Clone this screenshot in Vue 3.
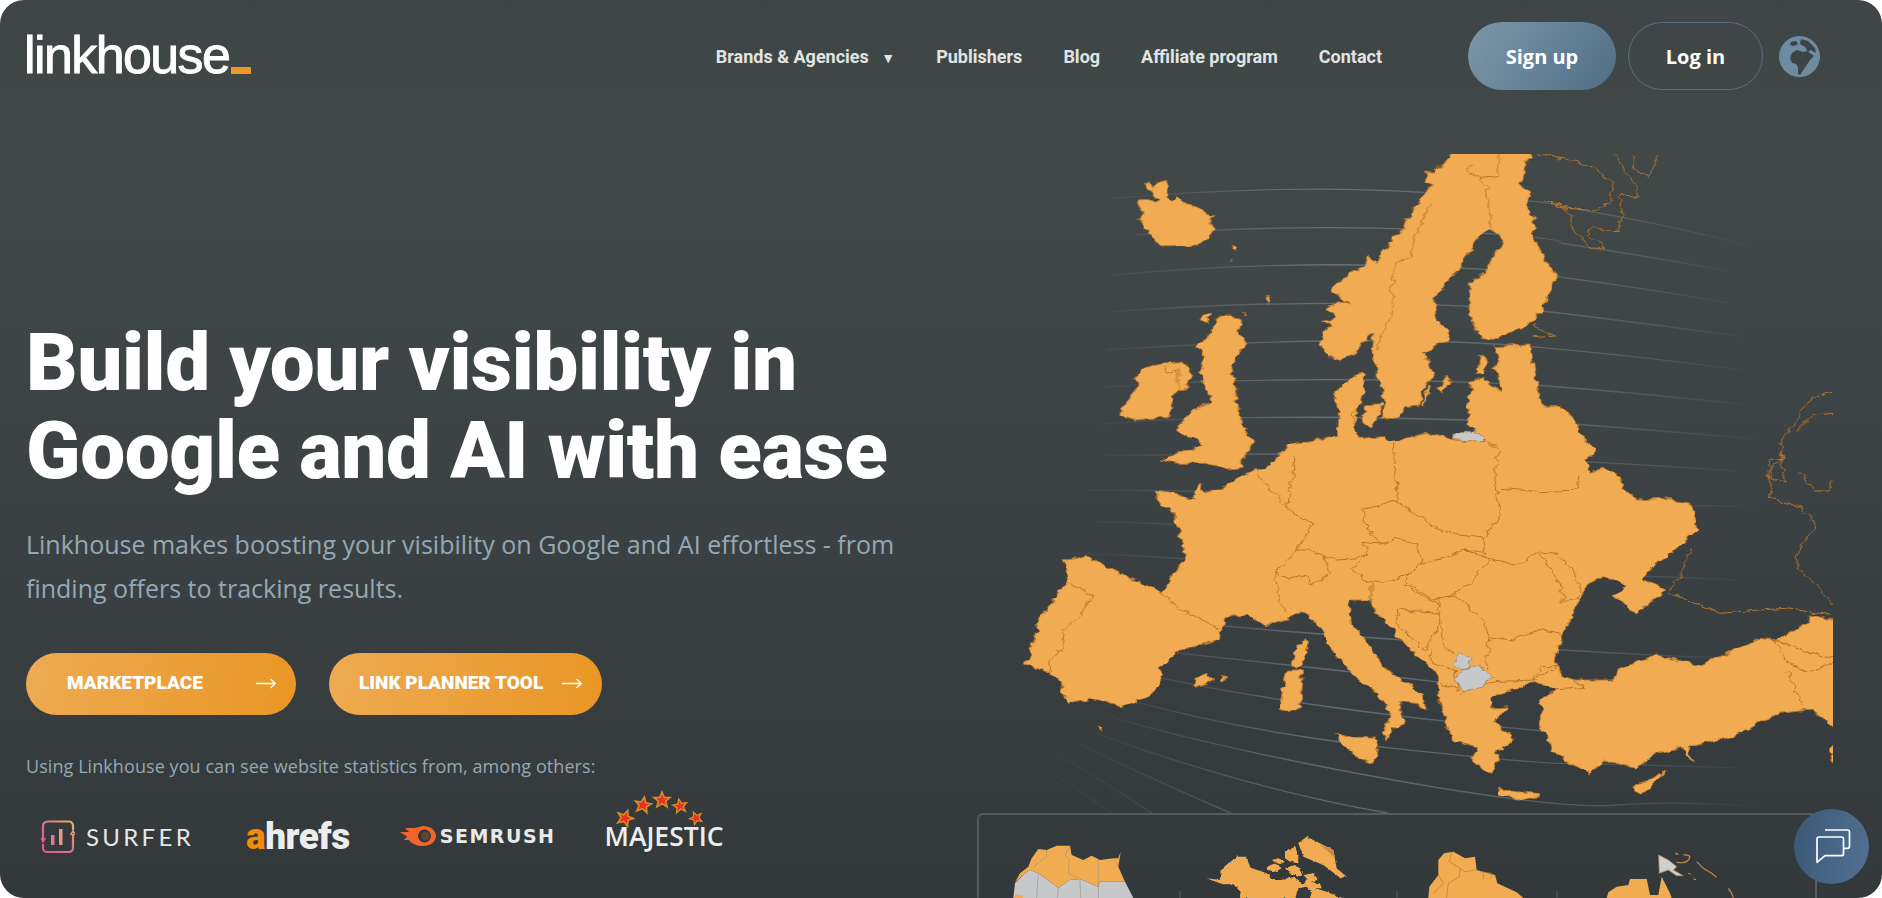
<template>
  <div class="page">
    <header class="topbar">
      <a class="logo">linkhouse<span class="logo-dash"></span></a>
      <nav class="nav">
        <a class="nav-link">Brands &amp; Agencies <span class="caret">▼</span></a>
        <a class="nav-link">Publishers</a>
        <a class="nav-link">Blog</a>
        <a class="nav-link">Affiliate program</a>
        <a class="nav-link">Contact</a>
      </nav>
      <a class="btn-signup">Sign up</a>
      <a class="btn-login">Log in</a>
      <svg class="globe" viewBox="0 0 41 41">
        <circle cx="20.5" cy="20.5" r="20.5" fill="#6d8ba1" />
        <path d="M12 6 17 5 19 8 15 10 11 9ZM22 3 29 5 36 12 37 17 32 14 29 16 26 11 21 8Z" fill="#3b4446" />
        <path d="M11 22 13 17 18 14 24 16 28 15 35 20 31 24 27 30 21 39 19 38 19 31 17 28 13 27Z" fill="#3b4446" />
      </svg>
    </header>

    <section class="hero">
      <h1>Build your visibility in<br />Google and AI with ease</h1>
      <p class="lead">Linkhouse makes boosting your visibility on Google and AI effortless - from finding offers to tracking results.</p>
      <div class="cta-row">
        <a v-for="cta in ctas" :key="cta.label" class="cta" :class="cta.cls">
          <span>{{ cta.label }}</span>
          <svg class="cta-arrow" viewBox="0 0 20 12"><path d="M0 6.5H19M14.5 2 19.2 6.5 14.5 11" fill="none" stroke="#fff" stroke-width="1.3" /></svg>
        </a>
      </div>
      <p class="stats-note">Using Linkhouse you can see website statistics from, among others:</p>
      <div class="logos">
        <div class="surfer">
          <svg viewBox="0 0 34 33" width="34" height="33">
            <defs>
              <linearGradient id="surf" x1="0" y1="1" x2="1" y2="0">
                <stop offset="0" stop-color="#e2558f" />
                <stop offset=".55" stop-color="#d9798a" />
                <stop offset="1" stop-color="#e8b26a" />
              </linearGradient>
            </defs>
            <path d="M2 20V6a4.500 4.500 0 0 1 4.500-4.500H28A4.500 4.500 0 0 1 32 6v4M32 14v14a4 4 0 0 1-4 4H6a4 4 0 0 1-4-4v-4" fill="none" stroke="url(#surf)" stroke-width="2.200" />
            <path d="M0 18 2 22 4.500 18M29.500 15 32 11 34.500 15" fill="none" stroke="url(#surf)" stroke-width="1.500" />
            <rect x="10" y="15" width="3.500" height="10" fill="#e6728c" />
            <rect x="18" y="9" width="3.500" height="16" fill="#e59a7a" />
          </svg>
          <span>SURFER</span>
        </div>
        <div class="ahrefs"><span class="ahrefs-a">a</span>hrefs</div>
        <div class="semrush">
          <svg viewBox="0 0 36 22" width="36" height="22">
            <path d="M0 7 9 7 5 3 15 3 23 1C30 1 36 5 36 11S30 21 23 21C17 21 12 19 9 15L4 15 7 11.500Z" fill="#f2642c" />
            <circle cx="24.500" cy="11" r="6.500" fill="#343a3c" />
            <circle cx="25.500" cy="11" r="4" fill="#f2642c" opacity=".25" />
          </svg>
          <span>SEMRUSH</span>
        </div>
        <div class="majestic">
          <svg class="stars" viewBox="0 0 110 40" width="110" height="40">
            <g v-for="s in stars" :key="s.x" :transform="`translate(${s.x} ${s.y}) rotate(${s.r}) scale(${s.k})`">
              <polygon points="0,-7 2,-2.300 7,-2.200 3.200,1 4.500,6 0,3.200 -4.500,6 -3.200,1 -7,-2.200 -2,-2.300" fill="#ea2f25" stroke="#d98c22" stroke-width="1.400" />
            </g>
          </svg>
          <span>MAJESTIC</span>
        </div>
      </div>
    </section>

    <svg class="map" viewBox="0 42 1482 1977" preserveAspectRatio="none">
      <defs>
        <linearGradient id="gridFade" gradientUnits="userSpaceOnUse" x1="0" y1="0" x2="1482" y2="0">
          <stop offset="0" stop-color="#a6bac5" stop-opacity="0" />
          <stop offset=".14" stop-color="#a6bac5" stop-opacity=".06" />
          <stop offset=".4" stop-color="#a6bac5" stop-opacity=".38" />
          <stop offset=".7" stop-color="#a6bac5" stop-opacity=".26" />
          <stop offset=".92" stop-color="#a6bac5" stop-opacity="0" />
        </linearGradient>
        <filter id="coast" x="-2%" y="-2%" width="104%" height="104%">
          <feTurbulence type="fractalNoise" baseFrequency="0.05" numOctaves="2" seed="4" />
          <feDisplacementMap in="SourceGraphic" scale="18" xChannelSelector="R" yChannelSelector="G" />
        </filter>
      </defs>
      <path v-for="(d, i) in gridLines" :key="i" :d="d" class="grid-line" stroke="url(#gridFade)" />
      <g filter="url(#coast)">
        <polygon v-for="(p, i) in northLand" :key="i" :points="p" class="land" />
        <path v-for="(d, i) in northBorders" :key="i" :d="d" class="border" />
        <polygon :points="kaliningrad" class="land grey" />
        <g transform="translate(0 930)">
          <polygon v-for="(p, i) in southLand" :key="i" :points="p" class="land" />
          <path v-for="(d, i) in southBorders" :key="i" :d="d" class="border" />
          <polygon v-for="(p, i) in greyLand" :key="i" :points="p" class="land grey" />
        </g>
        <path v-for="(d, i) in russiaLines" :key="i" :d="d" class="border" />
      </g>
    </svg>

    <div class="inset">
      <svg viewBox="979 815 836 83" width="836" height="83">
        <defs>
          <filter id="coastSmall" x="-2%" y="-2%" width="104%" height="104%">
            <feTurbulence type="fractalNoise" baseFrequency="0.3" numOctaves="2" seed="7" />
            <feDisplacementMap in="SourceGraphic" scale="3" xChannelSelector="R" yChannelSelector="G" />
          </filter>
        </defs>
        <path d="M1180 891V898M1397 891V898M1557 891V898" stroke="#5a6061" stroke-width="1" />
        <g transform="translate(970 805) scale(.33333)">
          <polygon points="130,279 135,235 165,205 180,195 205,205 265,248 300,225 330,222 385,245 390,230 465,230 490,279" fill="#c7c8ca" />
          <polygon points="135,232 150,205 175,185 185,160 205,132 230,135 260,122 300,122 305,150 340,165 365,152 390,165 430,160 445,160 452,140 445,185 465,230 390,230 385,245 330,222 300,225 265,248 205,205 180,195 165,205" fill="#f1ac52" />
          <polygon points="132,279 137,268 155,270 160,279" fill="#f1ac52" />
          <path d="M190 185 230 155 230 135M300 122 285 150 298 165 295 205 330 222 332 279M385 245 385 165M445 185 430 160M205 205 200 279M265 248 262 279M385 245 385 279" fill="none" stroke="#8f8a80" stroke-width="1.500" />
        </g>
        <g filter="url(#coastSmall)">
          <g transform="translate(970 805) scale(.33333)">
            <polygon points="710,220 750,225 752,195 775,175 800,155 828,155 842,188 890,205 910,225 935,225 960,215 985,225 1000,240 1010,222 1040,238 1050,235 1055,250 1035,250 1075,262 1100,275 1125,279 810,279 812,260 790,238 760,238 730,228" fill="#f1ac52" />
            <polygon points="975,279 985,250 1010,245 1025,262 1020,279" fill="#353b3d" />
            <polygon points="890,185 915,175 935,190 915,200 895,195" fill="#f1ac52" />
            <polygon points="905,165 925,160 945,170 930,178" fill="#f1ac52" />
            <polygon points="945,140 975,125 985,150 985,175 960,170 945,160" fill="#f1ac52" />
            <polygon points="945,190 975,180 1000,205 985,215 960,205" fill="#f1ac52" />
            <polygon points="1000,210 1030,205 1045,225 1020,230" fill="#f1ac52" />
            <polygon points="985,115 1010,95 1060,120 1090,135 1100,190 1130,215 1110,218 1060,180 1000,155" fill="#f1ac52" />
            <polygon points="1050,118 1090,135 1095,160 1075,140" fill="#c98a44" />
          </g>
        </g>
        <g transform="translate(1420 805) scale(.33333)">
          <polygon points="25,279 28,245 55,210 55,165 72,145 100,140 135,160 165,155 170,195 190,200 225,210 232,235 290,262 310,279" fill="#f1ac52" />
          <path d="M95 140 88 170 120 190 118 215 85 235 80 279M170 195 135 200 120 190M55 210 70 235 40 265M180 200 215 205 212 222M190 205 190 222" fill="none" stroke="#b9772c" stroke-width="2" />
          <polygon points="716,150 745,165 770,185 760,195 790,212 770,212 745,195 718,205" fill="#cfcfd1" stroke="#c08b4d" stroke-width="2" />
          <polygon points="560,279 565,262 590,245 625,240 630,222 680,222 690,270 715,270 725,215 750,265 755,279" fill="#f1ac52" />
          <path d="M770 172Q805 178 810 155Q803 148 790 150M765 145 775 148M830 170 850 190 875 205 890 217M925 250 935 265 940 278M805 205 812 208M820 222 828 224" fill="none" stroke="#c98a44" stroke-width="3.500" />
        </g>
      </svg>
    </div>

    <button class="chat">
      <svg viewBox="0 0 75 75" width="75" height="75">
        <path d="M31 21H53.500Q55.500 21 55.500 23V37.500Q55.500 39.300 53.500 39.300H50" fill="none" stroke="#fff" stroke-width="1.700" />
        <path d="M25 28H47.500Q49.500 28 49.500 30V44.700Q49.500 46.700 47.500 46.700H31L23 53.300V30Q23 28 25 28Z" fill="none" stroke="#fff" stroke-width="1.700" stroke-linejoin="round" />
      </svg>
    </button>
  </div>
</template>

<script setup>
const ctas = [
  { label: 'MARKETPLACE', cls: 'cta-market' },
  { label: 'LINK PLANNER TOOL', cls: 'cta-planner' }
]

const stars = [
  { x: 21, y: 28, r: 20, k: 1.15 },
  { x: 39, y: 15, r: 10, k: 1.15 },
  { x: 58, y: 10, r: 0, k: 1.15 },
  { x: 76, y: 16, r: -10, k: 1 },
  { x: 92, y: 28, r: -24, k: .9 }
]

// map points are in a stretched grid: x is page px / .5625, y is page px * 3
const gridLines = [
  'M200 175Q520 130 760 158T1000 200Q1180 250 1340 320',
  'M240 285Q520 250 760 270T1000 310Q1160 350 1300 395',
  'M200 405Q430 370 650 375T990 410Q1150 445 1300 490',
  'M200 515Q400 490 600 490T965 513Q1150 550 1320 590',
  'M190 630Q350 610 570 603T960 622Q1150 650 1340 695',
  'M180 742Q300 725 500 720T950 735Q1150 760 1330 795',
  'M180 852Q300 835 500 832T1020 852Q1200 875 1360 900',
  'M190 947Q400 940 600 943T1040 965Q1180 978 1310 993',
  'M150 1050Q300 1050 500 1060',
  'M170 1145Q300 1150 500 1170T1240 1097Q1300 1097 1350 1100',
  'M120 1240Q280 1245 420 1270T1170 1310Q1250 1315 1310 1320',
  'M380 1455Q600 1490 1000 1530T1300 1540',
  'M320 1540Q600 1590 800 1630',
  'M290 1615Q500 1690 800 1745T980 1757',
  'M240 1685Q450 1780 700 1825T1000 1870T1400 1888',
  'M195 1730Q400 1830 700 1920T1100 1995T1400 2005',
  'M170 1780Q450 1950 690 2019',
  'M140 1810Q260 1910 410 2019',
  'M100 1840Q180 1920 270 2019',
  'M60 1860Q120 1930 200 2019'
]

const northLand = [
  // iceland
  '258,135 268,128 272,140 282,126 295,118 300,140 296,160 305,185 318,172 330,190 345,200 360,210 372,222 382,228 372,238 380,262 375,285 360,310 345,320 320,316 290,318 275,305 262,270 243,235 258,225 246,180 260,178 275,190 285,180 270,155',
  '415,315 421,322 418,334 414,325',
  '410,355 412,365 408,365',
  '475,465 482,470 476,494 472,480',
  // scandinavia, the norwegian side has its fjord teeth written out
  '808,30 790,70 780,80 770,100 758,95 755,120 770,128 765,140 752,165 745,195 735,200 730,240 722,235 715,280 700,290 690,320 678,330 670,370 655,352 640,390 625,392 610,420 596,425 590,450 610,480 622,490 600,485 580,510 596,530 575,545 590,560 572,575 575,600 570,610 585,650 605,662 630,640 640,620 660,580 665,640 670,700 680,750 685,790 680,835 710,830 720,800 745,795 750,760 770,700 755,640 780,610 800,605 795,570 775,540 775,470 790,430 815,395 835,340 850,290 870,268 890,285 895,310 875,350 860,400 835,430 835,520 845,565 865,605 900,585 945,550 965,510 990,410 970,360 950,290 950,240 935,190 945,160 925,125 945,30',
  // britain
  '400,525 430,540 420,570 440,610 420,650 410,680 418,720 420,780 435,870 450,900 430,965 430,985 405,990 370,970 320,970 285,960 310,940 360,915 340,890 310,870 345,810 370,790 375,770 355,700 365,650 350,620 375,580 385,540',
  '355,540 375,518 378,525 365,548',
  '433,515 438,525 436,532',
  // ireland
  '255,685 290,670 320,665 340,690 335,745 315,750 300,830 240,840 215,825 220,790 245,740 240,715',
  // baltic islands
  '795,705 800,720 788,762 782,745',
  '764,735 768,738 752,796 748,794',
  '855,645 870,660 860,705 848,700',
  '650,795 680,790 675,830 660,865 645,850',
  '618,810 635,815 630,860 615,840'
]

const northBorders = [
  'M765 195 740 280 730 350 705 370 695 440 700 510 675 600 670 630',
  'M840 75 830 90 850 115 865 140 868 195 875 265',
  'M885 42V110L850 115',
  'M290 680 295 700 318 690 318 745',
  'M890 700 915 695 950 725',
  'M835 795 900 790 935 830',
  'M935 830V890L895 935 875 910'
]

const southLand = [
  // mainland
  '278,120 300,125 345,150 352,100 365,125 395,115 430,75 455,60 480,45 490,20 520,-20 560,-30 600,-40 603,-100 595,-170 620,-210 645,-235 650,-180 640,-140 625,-100 640,-35 685,-40 695,-25 760,-50 810,-30 865,-25 835,-70 832,-130 840,-205 860,-215 890,-175 890,-225 875,-245 890,-260 880,-310 945,-315 950,-230 955,-195 965,-135 1000,-125 1020,-100 1030,-50 1060,0 1040,30 1050,70 1075,55 1100,80 1105,110 1135,150 1175,145 1230,160 1240,240 1215,280 1195,310 1150,365 1145,390 1185,420 1160,450 1130,492 1095,440 1115,405 1075,380 1050,395 1030,450 1015,510 1000,560 990,630 1000,680 1025,690 1040,715 990,720 950,695 920,720 890,730 870,745 875,775 905,770 880,810 915,870 880,910 885,925 875,970 860,960 840,930 850,890 825,880 805,870 780,750 780,680 745,620 730,600 700,540 680,500 668,490 660,450 625,450 622,470 625,520 660,590 680,650 750,730 758,780 740,760 710,755 722,820 700,835 685,872 680,850 695,790 665,720 630,680 590,600 570,530 540,485 510,510 470,530 440,495 400,500 395,540 385,570 325,600 285,650 290,700 255,745 215,770 160,745 120,760 105,690 85,665 55,650 45,645 60,580 65,520 100,440 120,390 115,330 155,320 240,390 290,430 310,370 330,320 320,250 310,190 280,150',
  // turkey
  '1085,690 1110,650 1170,615 1240,645 1290,615 1350,565 1380,570 1410,545 1440,510 1440,495 1500,515 1500,835 1482,830 1440,780 1385,790 1340,830 1300,860 1255,880 1225,890 1230,940 1215,890 1170,910 1130,955 1075,930 1050,968 1020,945 985,910 975,860 960,830 965,780 960,750 990,720 1040,712 1020,690',
  '1500,880 1480,880 1478,940 1500,940',
  // islands
  '520,650 525,590 547,565 545,620 530,655',
  '510,660 540,660 535,770 515,785 497,775 505,700',
  '597,850 620,860 670,865 675,890 665,940 640,925 610,885',
  '345,690 370,670 380,690 355,710 350,715',
  '390,672 402,690 395,690',
  '885,1015 920,1025 960,1030 960,1040 920,1050 890,1035',
  '1185,965 1165,1000 1140,1035 1125,1020 1130,1005',
  '173,828 180,832 177,845'
]

const southBorders = [
  'M290 430 320 480 360 510 395 540',
  'M120 395 165 440 150 480 115 540 110 600 90 630 85 665',
  'M455 65 490 135 520 185 555 225 530 300',
  'M525 20 520 90 510 180',
  'M530 300 490 365 495 450 510 490',
  'M490 365 510 390 545 375 555 405 580 380 590 365 575 320 550 300 530 300',
  'M575 320 600 330 650 320 650 280 675 285 705 265 740 280',
  'M700 -20 705 150 645 180 655 240 675 285',
  'M705 150 740 195 785 240 820 255 860 265 890 195 880 100 885 0 870 -25',
  'M740 280 750 340 790 325 825 300 865 310 860 265',
  'M725 375 750 340M825 300 870 325 840 400 810 430 770 450 725 400 725 370',
  'M650 320 625 355 655 395 685 400 725 375',
  'M870 325 920 345 960 305 990 310 1020 360 1035 440',
  'M960 310 1000 410 1000 460 1030 440',
  'M1000 555 960 540 910 570 870 560 860 510 810 435 780 445 785 520 790 590 808 612',
  'M870 560 865 640 870 660',
  'M660 400 660 460M720 405 780 465M705 480 710 530 755 600 775 555 785 490 735 485 705 475',
  'M765 600 770 640 810 660 815 720 785 700',
  'M875 695 950 690 990 650M820 730 875 695M950 690 965 650 995 650',
  'M890 115 960 125 1025 120 1030 80',
  'M1380 570 1400 640 1440 665 1482 640M1400 665 1415 720 1430 770',
  'M1380 570 1440 610 1480 620'
]

const russiaLines = [
  'M955 42Q1000 50 1060 85L1090 130 1085 190 1060 210 1000 200 970 180 1010 210 1020 270 1050 320 1075 330 1070 310 1045 290 1050 260 1100 275 1105 225 1105 160 1135 175 1130 130 1110 90 1095 42',
  'M1130 42 1125 85 1155 115 1165 70 1170 42',
  'M950 590 985 585 965 570 950 555',
  'M1482 755 1450 770 1430 800 1415 850 1390 900 1395 960 1370 955 1365 1010 1395 1030 1390 930',
  'M1482 820 1445 825 1415 875',
  'M1390 930 1395 960 1370 980 1372 1070 1420 1100 1445 1140 1450 1170 1425 1210 1415 1270 1450 1330 1482 1395',
  'M1482 1020 1475 1050 1450 1050 1420 1000',
  'M1190 1360 1240 1390 1280 1420 1350 1410 1400 1405 1480 1425',
  'M1190 1350 1215 1290 1230 1225'
]

const kaliningrad = '812,878 838,878 850,865 865,880 860,908 830,905 810,900'

const greyLand = [
  '818,607 838,630 835,650 820,660 805,635',
  '820,660 855,645 873,680 860,710 825,725 812,695'
]
</script>

<style>
html,
body {
  margin: 0;
  background: #fff;
  overflow: hidden;
}
</style>

<style scoped>
.page {
  position: relative;
  width: 1882px;
  height: 898px;
  overflow: hidden;
  border-radius: 24px;
  background: linear-gradient(180deg, #3f4546 0%, #414847 18%, #3d4345 50%, #33393b 100%);
  color: #fff;
}

.topbar {
  display: flex;
  align-items: center;
  height: 68px;
  padding: 22px 62px 0 26px;
}

.logo {
  display: flex;
  align-items: flex-end;
  font-family: "Liberation Sans", Arial, sans-serif;
  font-size: 52px;
  line-height: 52px;
  letter-spacing: -1.6px;
  color: #fff;
  -webkit-text-stroke: .9px #fff;
  margin: -3px 0 0 -2px;
}

.logo-dash {
  width: 20px;
  height: 7px;
  margin: 0 0 7px 2px;
  background: #ec9a26;
}

.nav {
  display: flex;
  gap: 41px;
  margin-left: auto;
  margin-right: 86px;
}

.nav-link {
  font-family: Roboto, sans-serif;
  font-weight: 700;
  font-size: 18px;
  color: #e2e4e4;
  white-space: nowrap;
}

.caret {
  display: inline-block;
  margin-left: 8px;
  font-size: 14px;
  vertical-align: 0;
}

.btn-signup,
.btn-login {
  display: flex;
  align-items: center;
  justify-content: center;
  height: 68px;
  box-sizing: border-box;
  border-radius: 34px;
  font-family: "Open Sans", sans-serif;
  font-weight: 700;
  font-size: 20px;
  color: #fff;
}

.btn-signup {
  width: 148px;
  background: linear-gradient(125deg, #7c98aa 0%, #4f6e85 100%);
}

.btn-login {
  width: 135px;
  margin: 0 16px 0 12px;
  border: 1px solid #566d7e;
}

.globe {
  width: 41px;
  height: 41px;
  flex: none;
}

.hero {
  padding: 0 0 0 26px;
}

h1 {
  margin: 229px 0 0;
  font-family: Roboto, sans-serif;
  font-weight: 900;
  font-size: 80px;
  letter-spacing: -.4px;
  line-height: 88px;
  color: #fff;
}

.lead {
  width: 900px;
  margin: 27px 0 0;
  font-family: "Open Sans", sans-serif;
  font-size: 25px;
  line-height: 44px;
  color: #94a9b3;
}

.cta-row {
  display: flex;
  gap: 33px;
  margin-top: 43px;
}

.cta {
  display: flex;
  align-items: center;
  justify-content: space-between;
  box-sizing: border-box;
  height: 62px;
  padding: 0 20px 3px 41px;
  border-radius: 31px;
  background: linear-gradient(100deg, #eeab52 0%, #e99624 100%);
  font-family: Roboto, sans-serif;
  font-weight: 900;
  font-size: 19px;
  color: #fff;
  white-space: nowrap;
}

.cta-market {
  width: 270px;
}

.cta-planner {
  width: 273px;
  padding-left: 30px;
}

.cta-arrow {
  width: 20px;
  height: 12px;
  flex: none;
}

.stats-note {
  margin: 39px 0 0;
  font-family: "Open Sans", sans-serif;
  font-size: 18px;
  letter-spacing: .07px;
  line-height: 24px;
  color: #94a9b0;
}

.logos {
  display: flex;
  align-items: center;
  margin: 40px 0 0 15px;
  height: 36px;
}

.surfer {
  display: flex;
  align-items: center;
  gap: 11px;
  font-family: Lato, sans-serif;
  font-size: 24px;
  letter-spacing: 3.300px;
  color: #e6e8e8;
}

.ahrefs {
  margin-left: 52px;
  font-family: Roboto, sans-serif;
  font-weight: 900;
  font-size: 37px;
  letter-spacing: -.5px;
  color: #eceeee;
}

.ahrefs-a {
  color: #f08c05;
}

.semrush {
  display: flex;
  align-items: center;
  gap: 4px;
  margin-left: 50px;
  font-family: "DejaVu Sans", sans-serif;
  font-weight: 700;
  font-size: 19px;
  letter-spacing: 1.500px;
  color: #e8eaea;
}

.majestic {
  position: relative;
  margin-left: 49px;
  font-family: "Open Sans", sans-serif;
  font-weight: 600;
  font-size: 26.500px;
  color: #eceeee;
}

.stars {
  position: absolute;
  left: 0;
  top: -28px;
}

.map {
  position: absolute;
  left: 1000px;
  top: 154px;
  width: 833px;
  height: 659px;
}

.grid-line {
  fill: none;
  stroke-width: 1.400;
  vector-effect: non-scaling-stroke;
}

.land {
  fill: #f1ac52;
  stroke: #b9772c;
  stroke-width: 1;
  vector-effect: non-scaling-stroke;
}

.grey {
  fill: #c7c8ca;
  stroke: #a89068;
}

.border {
  fill: none;
  stroke: #b9772c;
  stroke-width: 1;
  vector-effect: non-scaling-stroke;
}

.inset {
  position: absolute;
  left: 977px;
  top: 813px;
  width: 836px;
  height: 100px;
  border: 2px solid #565c5d;
  border-radius: 6px;
}

.inset svg {
  display: block;
}

.chat {
  position: absolute;
  right: 13px;
  top: 809px;
  width: 75px;
  height: 75px;
  padding: 0;
  border: 0;
  border-radius: 50%;
  background: linear-gradient(100deg, #3b5876 0%, #527192 100%);
}

.chat svg {
  display: block;
}
</style>
